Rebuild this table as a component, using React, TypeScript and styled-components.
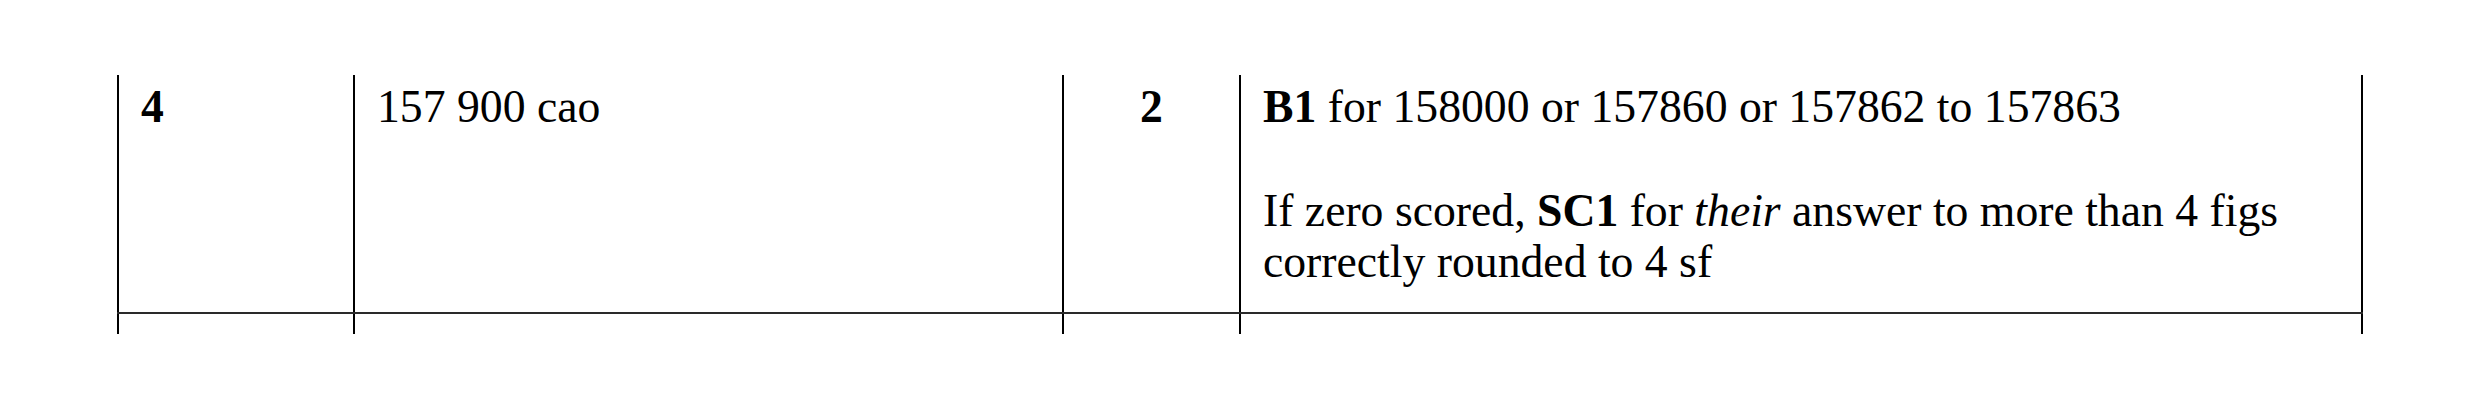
import React from "react"
import styled, { createGlobalStyle } from "styled-components"

const GlobalStyle = createGlobalStyle`
  html, body {
    margin: 0;
    padding: 0;
    background: #ffffff;
  }
  body {
    font-family: "Liberation Serif", "Times New Roman", serif;
    color: #000000;
  }
`

const Page = styled.div`
  width: 2480px;
  height: 410px;
  padding: 75px 0 0 117px;
  box-sizing: border-box;
`

const Row = styled.div<{ $last?: boolean }>`
  display: grid;
  width: max-content;
  grid-template-columns: 236px 709px 177px 1124px;
  border-bottom: ${(p) => (p.$last ? "none" : "2px solid #2a2a2a")};
`

const Cell = styled.div<{ $center?: boolean; $end?: boolean; $bold?: boolean }>`
  border-left: 2px solid #000;
  border-right: ${(p) => (p.$end ? "2px solid #000" : "none")};
  padding: 6px 22px 25px 22px;
  font-size: 45.7px;
  line-height: 51px;
  text-align: ${(p) => (p.$center ? "center" : "left")};
  font-weight: ${(p) => (p.$bold ? "bold" : "normal")};
`

const Stub = styled.div<{ $end?: boolean }>`
  height: 20px;
  border-left: 2px solid #000;
  border-right: ${(p) => (p.$end ? "2px solid #000" : "none")};
`

const Para = styled.p`
  margin: 0;
  & + & {
    margin-top: 53px;
  }
`

const App = () => {
  return (
    <>
      <GlobalStyle />
      <Page>
        <Row>
          <Cell $bold>4</Cell>
          <Cell>157 900 cao</Cell>
          <Cell $center $bold>
            2
          </Cell>
          <Cell $end>
            <Para>
              <b>B1</b> for 158000 or 157860 or 157862 to 157863
            </Para>
            <Para>
              If zero scored, <b>SC1</b> for <i>their</i> answer to more than 4 figs
              correctly rounded to 4 sf
            </Para>
          </Cell>
        </Row>
        <Row $last>
          <Stub />
          <Stub />
          <Stub />
          <Stub $end />
        </Row>
      </Page>
    </>
  )
}

export default App
